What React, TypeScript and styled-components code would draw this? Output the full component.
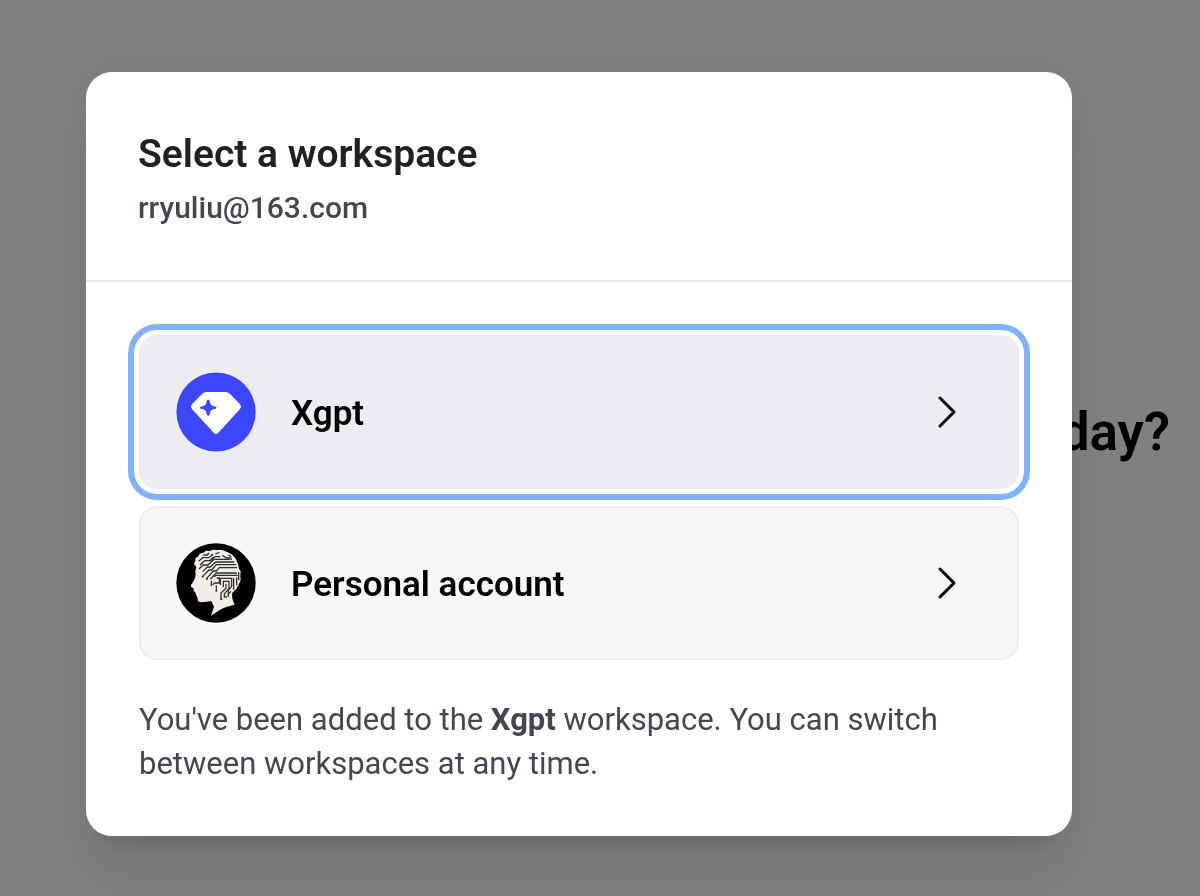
import React from "react";
import styled, { createGlobalStyle } from "styled-components";

const GlobalStyle = createGlobalStyle`
  *, *::before, *::after { box-sizing: border-box; }
  body {
    margin: 0;
    background: #808080;
    font-family: Roboto, "Liberation Sans", sans-serif;
    color: #000;
  }
  h1, h2, p, ul { margin: 0; padding: 0; }
`;

const Page = styled.main`
  display: flex;
  align-items: center;
  justify-content: flex-end;
  min-height: 100vh;
  padding: 0 30px 32px;
  overflow: hidden;
`;

const Greeting = styled.h1`
  font-size: 53px;
  line-height: 60px;
  font-weight: 600;
  white-space: nowrap;
`;

const Overlay = styled.div`
  position: fixed;
  inset: 0;
  display: flex;
  align-items: center;
  padding: 72px 128px 60px 86px;
`;

const Dialog = styled.section`
  flex: 1;
  border-radius: 26px;
  background: #fff;
  box-shadow: 0 40px 50px -10px rgba(0, 0, 0, 0.1), 0 16px 20px -12px rgba(0, 0, 0, 0.1),
    0 0 40px rgba(0, 0, 0, 0.05);
`;

const Header = styled.header`
  display: flex;
  flex-direction: column;
  gap: 12px;
  padding: 60px 52px 52px;
  border-bottom: 2px solid #e5e5e6;
`;

const Title = styled.h2`
  font-size: 39px;
  line-height: 44px;
  font-weight: 600;
  color: #202123;
`;

const Email = styled.p`
  font-size: 30px;
  line-height: 40px;
  font-weight: 500;
  color: #444654;
`;

const Body = styled.div`
  padding: 53px 53px 50px;
`;

const WorkspaceList = styled.ul`
  display: flex;
  flex-direction: column;
  gap: 17px;
  list-style: none;
`;

const WorkspaceButton = styled.button<{ $selected?: boolean }>`
  display: flex;
  align-items: center;
  gap: 35px;
  width: 100%;
  padding: 35px 53px 35px 35px;
  border: 2px solid #ececf1;
  border-radius: 18px;
  background: ${(p) => (p.$selected ? "#ececf1" : "#f7f7f8")};
  box-shadow: ${(p) => (p.$selected ? "0 0 0 5px #fff, 0 0 0 11px #80b2fc" : "none")};
  outline: none;
  color: #000;
  font: inherit;
  text-align: left;
  cursor: pointer;
`;

const Avatar = styled.svg`
  flex: none;
  width: 80px;
  height: 80px;
`;

const Name = styled.span`
  flex: 1;
  padding-top: 4px;
  font-size: 35px;
  line-height: 44px;
  font-weight: 600;
`;

const Chevron = styled.svg`
  flex: none;
  width: 32px;
  height: 36px;
  fill: none;
  stroke: #000;
  stroke-width: 3;
  stroke-linecap: round;
  stroke-linejoin: round;
`;

const Note = styled.p`
  margin-top: 38px;
  font-size: 31px;
  line-height: 44px;
  color: #444654;

  strong { font-weight: 700; }
`;

const GemAvatar = () => (
  <Avatar viewBox="0 0 80 80" aria-hidden="true">
    <circle cx="40" cy="40" r="39.6" fill="#3c46ff" />
    <path
      fill="#fff"
      d="M30.5 20h19q2.500 0 4.300 1.700l9.800 10.100q2.600 2.900 0 5.700L42.600 60.500q-2.600 2.600-5.200 0L16.400 37.500q-2.600-2.800 0-5.700l9.800-10.100Q28 20 30.500 20Z"
    />
    <path
      fill="#3c46ff"
      d="M32.200 27.400q1.500 0 1.700 2.600.5 3.800 4 4.300 2.600.3 2.600 1.400t-2.600 1.400q-3.500.5-4 4.300-.2 2.400-1.700 2.400t-1.700-2.400q-.5-3.800-4-4.300-2.600-.3-2.600-1.400t2.600-1.400q3.500-.5 4-4.300.2-2.600 1.700-2.600Z"
    />
  </Avatar>
);

const HeadAvatar = () => (
  <Avatar viewBox="32 25 240 240" aria-hidden="true">
    <circle cx="152" cy="145" r="119" fill="#000" />
    <path
      fill="#f2eee6"
      d="M93 97L86 88L90 78L90 70L98 66L103 57L114 54L122 48L134 49L142 45L158 46L170 46L184 51L198 58L210 70L218 88L221 102L226 110L225 124L226 136L220 150L212 164L200 176L201 192L208 210L184 216L164 225L137 243L142 228L146 216L138 199L124 201L106 203L98 200L96 188L92 180L90 173L84 168L86 162L77 156L77 151L87 135L91 122L90 110Z"
    />
    <g fill="none" stroke="#2c2e2d" strokeWidth="3.8">
      <path d="M100 80l12-11h18l10-8M104 91l14-13h18l13-12h15M101 103l12-12h14l20-17h46M112 111l14-14h9l16-15h56M112 125l19-19h8l14-16h60M124 131l20-22h9l9-10h53M135 133l18-18h62M147 126l6-4h64" />
      <path d="M114 61h12l5-6M150 58l12-5M171 62l12 8h13M190 60l8 7M134 77l10-10" />
      <path d="M165 151v-20h34v24l-10 12v20M174 158v-18h17v22l-14 15v12M182 147v14l-15 14v20M205 130v35M214 128v24M154 130h8v15h-14l-6 5M153 152v14M138 138v10M197 170l-9 10M220 112v25" />
    </g>
    <g fill="#2c2e2d">
      <circle cx="141" cy="60" r="3" />
      <circle cx="197" cy="73" r="3" />
      <circle cx="112" cy="126" r="3" />
      <circle cx="125" cy="133" r="3" />
      <circle cx="138" cy="151" r="3" />
      <circle cx="153" cy="168" r="3" />
      <circle cx="168" cy="194" r="3" />
      <circle cx="182" cy="187" r="3" />
    </g>
  </Avatar>
);

const ChevronRight = () => (
  <Chevron viewBox="0 0 32 36" aria-hidden="true">
    <path d="M8 4l14 14L8 32" />
  </Chevron>
);

export default function App() {
  return (
    <>
      <GlobalStyle />
      <Page>
        <Greeting>How can I help you today?</Greeting>
      </Page>
      <Overlay>
        <Dialog role="dialog" aria-modal="true" aria-labelledby="dialog-title">
          <Header>
            <Title id="dialog-title">Select a workspace</Title>
            <Email>rryuliu@163.com</Email>
          </Header>
          <Body>
            <WorkspaceList>
              <li>
                <WorkspaceButton type="button" $selected>
                  <GemAvatar />
                  <Name>Xgpt</Name>
                  <ChevronRight />
                </WorkspaceButton>
              </li>
              <li>
                <WorkspaceButton type="button">
                  <HeadAvatar />
                  <Name>Personal account</Name>
                  <ChevronRight />
                </WorkspaceButton>
              </li>
            </WorkspaceList>
            <Note>
              You've been added to the <strong>Xgpt</strong> workspace. You can switch between
              workspaces at any time.
            </Note>
          </Body>
        </Dialog>
      </Overlay>
    </>
  );
}
